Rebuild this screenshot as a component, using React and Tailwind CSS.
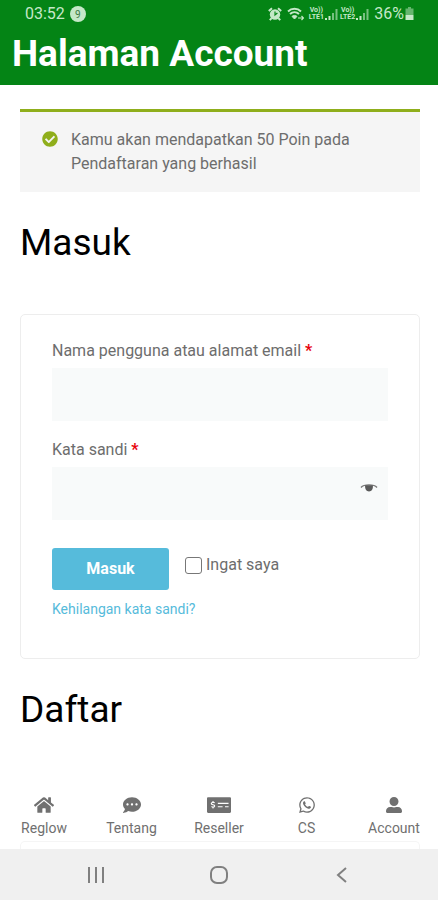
import { useState } from "react";
import {
  FaCheckCircle,
  FaCommentDots,
  FaHome,
  FaMoneyCheckAlt,
  FaUserAlt,
  FaWhatsapp,
} from "react-icons/fa";

const navItems = [
  { label: "Reglow", icon: FaHome, size: "h-[18px] w-5" },
  { label: "Tentang", icon: FaCommentDots, size: "size-[18px]" },
  { label: "Reseller", icon: FaMoneyCheckAlt, size: "h-[18px] w-6" },
  { label: "CS", icon: FaWhatsapp, size: "size-[18px]" },
  { label: "Account", icon: FaUserAlt, size: "h-[18px] w-4" },
];

function AlarmIcon() {
  return (
    <svg width="14" height="14" viewBox="0 0 14 14" fill="none">
      <circle cx="7" cy="7.5" r="5.2" fill="currentColor" />
      <path d="M.8 4 4 1.200M13.200 4 10 1.200M3.600 11.200 1.800 13.200M10.400 11.200l1.800 2" stroke="currentColor" strokeWidth="2" />
      <path d="M7 4.500v3.500l2.400-2" stroke="#048415" strokeWidth="1.200" />
    </svg>
  );
}

function WifiIcon() {
  return (
    <svg width="17" height="14" viewBox="0 0 17 14" fill="none" stroke="currentColor">
      <path d="M1 4.400C4.600 1 10.400 1 14 4.400M3 7c2.600-2.400 6.400-2.400 9 0" strokeWidth="2" />
      <path d="M5 9.400c1.500-1.300 3.500-1.300 5 0L7.500 12z" fill="currentColor" />
      <path d="M11 11h5.500M14.500 9l2 2-2 2" strokeWidth="1.200" />
    </svg>
  );
}

function SignalIcon() {
  return (
    <svg width="13" height="14" viewBox="0 0 13 14" fill="currentColor">
      <path d="M0 11h2v2H0zM3.500 9h2v4h-2z" />
      <path d="M7 6h2v7H7zM10.500 2h2v11h-2z" opacity="0.6" />
    </svg>
  );
}

function Carrier({ line }) {
  return (
    <span className="flex items-center gap-px">
      <span className="flex flex-col items-center text-[7px] leading-[7px] font-bold">
        <span>Vo))</span>
        <span>{line}</span>
      </span>
      <SignalIcon />
    </span>
  );
}

function BatteryIcon() {
  return (
    <svg width="9" height="14" viewBox="0 0 9 14" fill="currentColor">
      <path d="M3 0h3v1.500h2.500V8h-8V1.500H3z" opacity="0.5" />
      <path d="M.5 8h8v5h-8z" />
    </svg>
  );
}

function EyeIcon() {
  return (
    <svg width="18" height="10" viewBox="0 0 18 10" fill="none">
      <path d="M1 4.500C4 1 14 1 17 4.500" stroke="#777" strokeWidth="1.300" />
      <path d="M5.200 2.200h7.600c.6 3.600-1.200 6.200-3.800 6.200S4.600 5.800 5.200 2.200z" fill="#5a5a5a" />
    </svg>
  );
}

function App() {
  const [showPassword, setShowPassword] = useState(false);
  const [remember, setRemember] = useState(false);

  return (
    <div className="min-h-screen flex flex-col bg-white font-[Roboto,sans-serif] text-[#6d6d6d]">
      {/* Header */}
      <header className="bg-[#048415] text-white h-[85px]">
        <div className="flex items-center justify-between h-7 pl-[25px] pr-6 text-[#c5e8c8]">
          <div className="flex items-center gap-[5px]">
            <span className="text-base">03:52</span>
            <span className="flex items-center justify-center size-4 rounded-full bg-[#c5e8c8] text-[10px] text-[#3f7a45]">
              9
            </span>
          </div>
          <div className="flex items-center gap-[5px]">
            <AlarmIcon />
            <WifiIcon />
            <div className="flex items-center gap-[2px]">
              <Carrier line="LTE1" />
              <Carrier line="LTE2" />
            </div>
            <span className="flex items-center gap-px text-base">
              36%
              <BatteryIcon />
            </span>
          </div>
        </div>
        <h1 className="px-3 text-[37px] leading-[52px] font-bold">Halaman Account</h1>
      </header>

      {/* Content */}
      <main className="flex-1 pt-6 pr-[18px] pl-5">
        <div className="flex gap-[13px] border-t-[3px] border-[#8fae1b] bg-[#f5f5f5] py-4 pl-[22px] pr-5">
          <FaCheckCircle className="mt-[3px] size-4 shrink-0 text-[#8fae1b]" />
          <p className="text-base leading-6">
            Kamu akan mendapatkan 50 Poin pada Pendaftaran yang berhasil
          </p>
        </div>

        <h2 className="mt-[27px] text-[37px] leading-[48px] text-black">Masuk</h2>

        <form
          className="mt-[47px] rounded-[5px] border border-[#ededed] px-[31px] pt-6 pb-[37px]"
          onSubmit={(e) => e.preventDefault()}
        >
          <label htmlFor="username" className="block text-base">
            Nama pengguna atau alamat email <span className="font-bold text-red-600">*</span>
          </label>
          <input
            id="username"
            type="text"
            className="mt-[5px] block h-[53px] w-full bg-[#f8fafa] px-4 outline-none"
          />

          <label htmlFor="password" className="mt-[17px] block text-base">
            Kata sandi <span className="font-bold text-red-600">*</span>
          </label>
          <div className="mt-[5px] flex h-[53px] items-center bg-[#f8fafa] pr-[10px]">
            <input
              id="password"
              type={showPassword ? "text" : "password"}
              className="h-full min-w-0 flex-1 px-4 outline-none"
            />
            <button
              type="button"
              aria-label="Tampilkan kata sandi"
              className="pb-3"
              onClick={() => setShowPassword(!showPassword)}
            >
              <EyeIcon />
            </button>
          </div>

          <div className="mt-7 flex items-start gap-4">
            <button
              type="submit"
              className="h-[42px] w-[117px] rounded-[3px] bg-[#56bbdb] text-base font-bold text-white"
            >
              Masuk
            </button>
            <label className="flex items-center gap-1 pt-[5px] text-base">
              <input
                type="checkbox"
                checked={remember}
                onChange={(e) => setRemember(e.target.checked)}
                className="size-[17px] appearance-none rounded-[3px] border border-[#777] bg-white checked:bg-[#56bbdb]"
              />
              Ingat saya
            </label>
          </div>

          <a href="#" className="mt-[7px] block text-sm leading-6 text-[#56bbdb]">
            Kehilangan kata sandi?
          </a>
        </form>

        <h2 className="mt-[27px] text-[37px] leading-[48px] text-black">Daftar</h2>
      </main>

      {/* Bottom menu */}
      <nav className="flex justify-between px-[2px] pb-[3px]">
        {navItems.map(({ label, icon: Icon, size }) => (
          <a key={label} href="#" className="flex w-[84px] flex-col items-center gap-1 text-[#707070]">
            <Icon className={size} preserveAspectRatio={label === "Reseller" ? "none" : undefined} />
            <span className="text-sm leading-5">{label}</span>
          </a>
        ))}
      </nav>
      <div className="mr-[18px] ml-5 h-2 rounded-t-[5px] border border-b-0 border-[#f5f5f5]" />

      {/* System buttons */}
      <footer className="grid h-[51px] grid-cols-[1fr_auto_1fr] items-center gap-[104px] bg-[#f0f0f0] text-[#808080]">
        <button aria-label="Recents" className="justify-self-end">
          <svg width="18" height="18" viewBox="0 0 18 18" stroke="currentColor" strokeWidth="2">
            <path d="M2 1v16M9 1v16M16 1v16" />
          </svg>
        </button>
        <button aria-label="Home">
          <svg width="20" height="20" viewBox="0 0 20 20" fill="none" stroke="currentColor" strokeWidth="2">
            <rect x="2" y="2" width="16" height="16" rx="6" />
          </svg>
        </button>
        <button aria-label="Back" className="justify-self-start">
          <svg width="18" height="18" viewBox="0 0 18 18" fill="none" stroke="currentColor" strokeWidth="2">
            <path d="M13 2 5 9l8 7" />
          </svg>
        </button>
      </footer>
    </div>
  );
}

export default App;
